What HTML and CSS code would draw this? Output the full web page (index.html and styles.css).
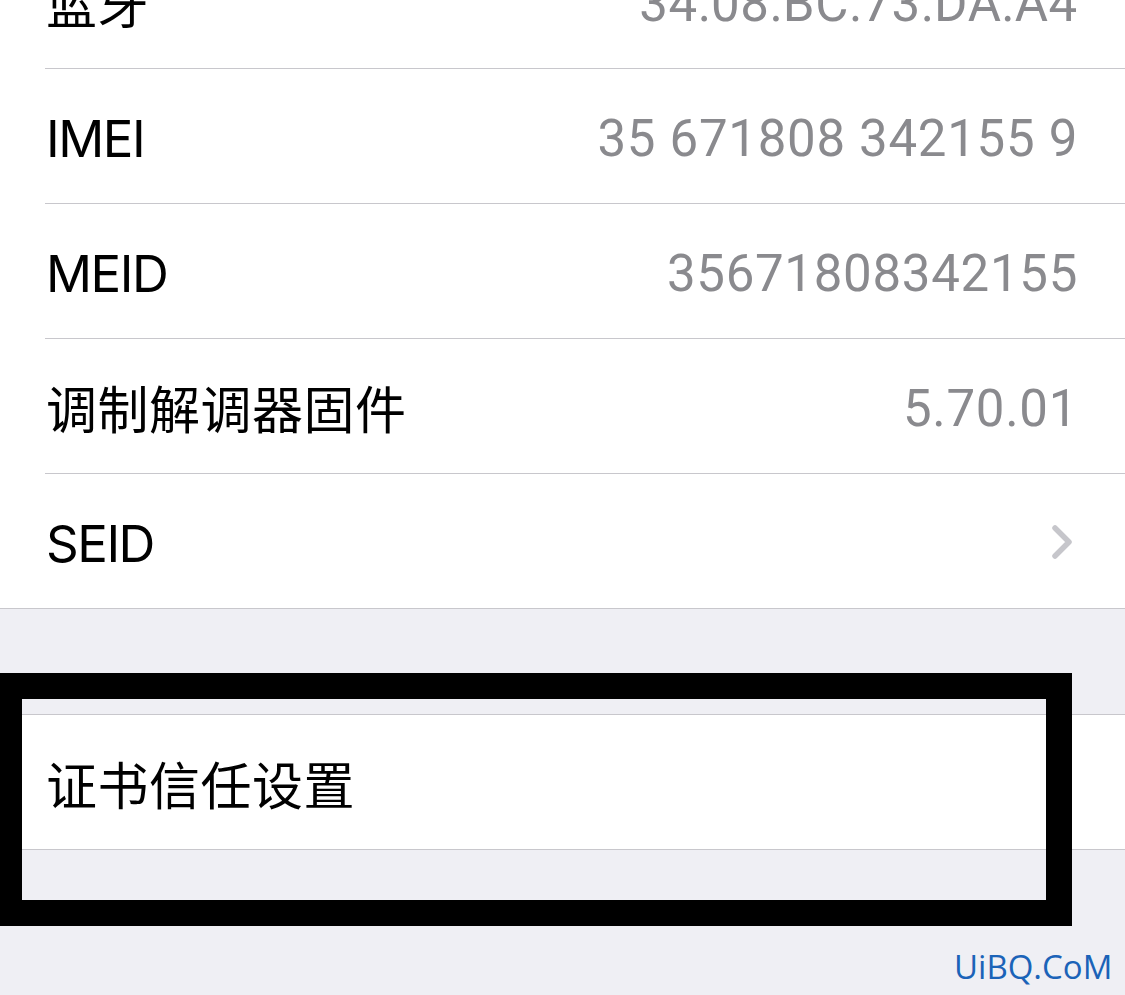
FILE: index.html
```html
<!DOCTYPE html>
<html lang="zh-CN">
<head>
<meta charset="utf-8">
<title>关于本机</title>
<link rel="stylesheet" href="styles.css">
</head>
<body>
<div class="screen">
  <section class="group group-first">
    <div class="row"><div class="row-inner"><span class="label label-cjk">蓝牙</span><span class="value">34:08:BC:73:DA:A4</span></div></div>
    <div class="row"><div class="row-inner"><span class="label">IMEI</span><span class="value">35 671808 342155 9</span></div></div>
    <div class="row"><div class="row-inner"><span class="label">MEID</span><span class="value">35671808342155</span></div></div>
    <div class="row"><div class="row-inner"><span class="label label-cjk">调制解调器固件</span><span class="value">5.70.01</span></div></div>
    <div class="row"><div class="row-inner"><span class="label">SEID</span>
      <svg class="chevron" width="24" height="36" viewBox="0 0 24 36" aria-hidden="true"><path d="M4 4 L18 18 L4 32" fill="none" stroke="#c6c6cb" stroke-width="5.5" stroke-linecap="round" stroke-linejoin="round"/></svg>
    </div></div>
  </section>
  <section class="group group-second">
    <div class="row"><div class="row-inner"><span class="label label-cjk">证书信任设置</span>
      <svg class="chevron" width="24" height="36" viewBox="0 0 24 36" aria-hidden="true"><path d="M4 4 L18 18 L4 32" fill="none" stroke="#c6c6cb" stroke-width="5.5" stroke-linecap="round" stroke-linejoin="round"/></svg>
    </div></div>
  </section>
  <div class="highlight-frame"></div>
  <div class="watermark">UiBQ.CoM</div>
</div>
</body>
</html>
```

FILE: styles.css
```css
html, body {
  margin: 0;
  padding: 0;
}
body {
  background: #efeff4;
  width: 1125px;
  height: 995px;
  overflow: hidden;
  font-family: "Inter", "Noto Sans CJK SC", sans-serif;
}
.screen {
  position: relative;
  width: 1125px;
  height: 995px;
  overflow: hidden;
}
.group {
  background: #ffffff;
  border-bottom: 1px solid #c8c7cc;
}
.group-first {
  margin-top: -66px;
}
.group-second {
  margin-top: 105px;
  border-top: 1px solid #c8c7cc;
}
.row {
  padding-left: 45px;
}
.row-inner {
  height: 134px;
  display: flex;
  align-items: center;
  justify-content: space-between;
  padding-right: 47px;
  border-bottom: 1px solid #c8c7cc;
}
.row:last-child .row-inner {
  border-bottom: none;
}
.label {
  font-size: 51px;
  color: #000;
  padding-left: 1px;
  padding-top: 4px;
  letter-spacing: -1.5px;
}
.label-cjk {
  letter-spacing: 0.5px;
  padding-top: 2px;
}
.value {
  font-family: "Roboto", "Inter", sans-serif;
  font-size: 51px;
  color: #8a8a8e;
  padding-top: 4px;
  letter-spacing: 0.7px;
}
.chevron {
  margin-right: 3px;
  margin-top: 2px;
}
.highlight-frame {
  position: absolute;
  left: -4px;
  top: 673px;
  width: 1024px;
  height: 201px;
  border: 26px solid #000;
}
.watermark {
  position: absolute;
  left: 954px;
  top: 944px;
  font-family: "Open Sans", sans-serif;
  font-size: 33px;
  color: #1b63b8;
}
```
